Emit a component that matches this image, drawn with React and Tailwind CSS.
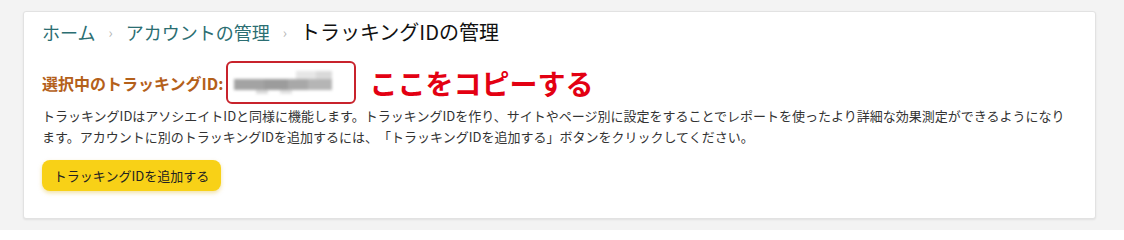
import React from "react";

const crumbs = ["ホーム", "アカウントの管理"];

const BlurredId = () => (
  <div className="flex h-[43px] w-[130px] items-center rounded-[6px] border-2 border-[#c8232c] px-[6px]">
    <div className="flex flex-col blur-[1.5px]">
      <div className="flex h-[8px]">
        <div className="w-[62px]" />
        <div className="w-[20px] bg-[#e6e6e6]" />
        <div className="w-[16px] bg-[#d9d9d9]" />
      </div>
      <div className="flex h-[11px]">
        <div className="w-[30px] bg-[#a3a3a3]" />
        <div className="w-[24px] bg-[#9c9c9c]" />
        <div className="w-[20px] bg-[#a8a8a8]" />
        <div className="w-[24px] bg-[#b5b5b5]" />
      </div>
      <div className="flex h-[4px]">
        <div className="w-[22px]" />
        <div className="w-[12px] bg-[#dcdcdc]" />
        <div className="w-[12px]" />
        <div className="w-[12px] bg-[#e2e2e2]" />
      </div>
    </div>
  </div>
);

export default function App() {
  return (
    <div className="h-[230px] w-[1124px] overflow-hidden bg-[#f3f3f3] pl-[23px] pt-[11px] font-['Noto_Sans_CJK_JP',sans-serif] [text-spacing-trim:space-all]">
      <div className="h-[208px] w-[1073px] rounded-[3px] border border-[#e2e2e2] bg-white px-[18px] pt-[7px] shadow-[0_1px_2px_rgba(0,0,0,0.08)]">
        {/* Breadcrumbs */}
        <nav className="flex h-[26px] items-center text-[18px] leading-[26px]">
          {crumbs.map((c) => (
            <React.Fragment key={c}>
              <span className="text-[#2b6e72]">{c}</span>
              <span className="mx-[13px] text-[14px] text-[#b5b5b5]">›</span>
            </React.Fragment>
          ))}
          <span className="text-[20px] text-[#111]">トラッキングIDの管理</span>
        </nav>

        <div className="mt-[16px] flex items-center">
          <span className="text-[16px] font-bold text-[#b4601a]">
            選択中のトラッキングID:
          </span>
          <div className="ml-[3px]">
            <BlurredId />
          </div>
          <span className="ml-[13px] text-[28px] font-bold leading-none text-[#e30012]">
            ここをコピーする
          </span>
        </div>

        <p className="mt-[1px] text-[13px] leading-[21px] text-[#333]">
          トラッキングIDはアソシエイトIDと同様に機能します。トラッキングIDを作り、サイトやページ別に設定をすることでレポートを使ったより詳細な効果測定ができるようになります。アカウントに別のトラッキングIDを追加するには、「トラッキングIDを追加する」ボタンをクリックしてください。
        </p>

        <button className="mt-[13px] flex h-[31px] w-[179px] items-center justify-center rounded-[8px] bg-[#f8d117] text-[13px] text-[#222] shadow-[0_2px_4px_rgba(213,170,0,0.35)]">
          トラッキングIDを追加する
        </button>
      </div>
    </div>
  );
}
